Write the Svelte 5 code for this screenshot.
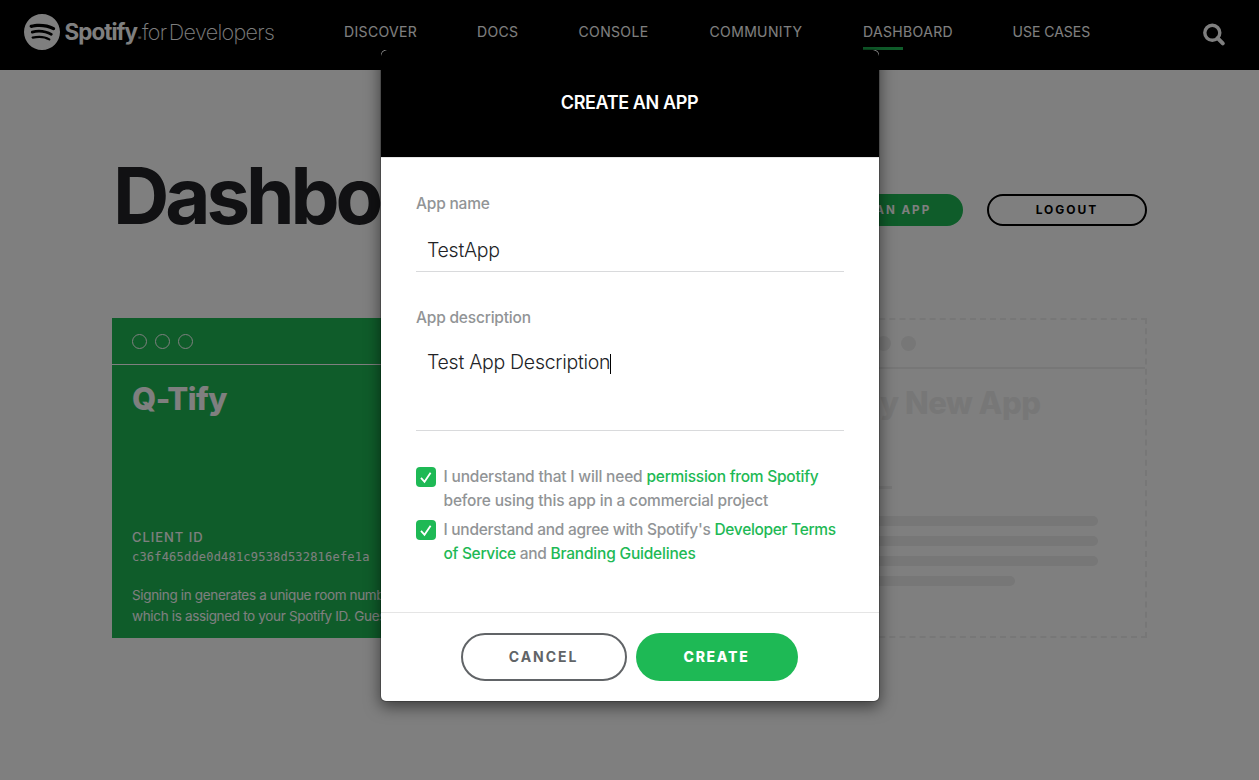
<script>
  const nav = ['Discover', 'Docs', 'Console', 'Community', 'Dashboard', 'Use Cases'];
  const active = 'Dashboard';
  const lines = [90, 90, 90, 60];
  let name = 'TestApp';
  let description = 'Test App Description';
</script>

<div class="page">
  <header>
    <a class="logo" href="#home" aria-label="Spotify for Developers">
      <svg width="36" height="36" viewBox="0 0 24 24" fill="#fff"><path d="M12 0C5.4 0 0 5.4 0 12s5.4 12 12 12 12-5.4 12-12S18.66 0 12 0zm5.521 17.34c-.24.359-.66.48-1.021.24-2.82-1.74-6.36-2.101-10.561-1.141-.418.122-.779-.179-.899-.539-.12-.421.18-.78.54-.9 4.56-1.021 8.52-.6 11.64 1.32.42.18.479.659.301 1.02zm1.44-3.3c-.301.42-.841.6-1.262.3-3.239-1.98-8.159-2.58-11.939-1.38-.479.12-1.02-.12-1.14-.6-.12-.48.12-1.021.6-1.141C9.6 9.9 15 10.561 18.72 12.84c.361.181.54.78.241 1.2zm.12-3.36C15.24 8.4 8.82 8.16 5.16 9.301c-.6.179-1.2-.181-1.38-.721-.18-.601.18-1.2.72-1.381 4.26-1.26 11.28-1.02 15.721 1.621.539.3.719 1.02.419 1.56-.299.421-1.02.599-1.559.3z"/></svg>
      <span class="brand">Spotify</span><span class="reg">®</span><span class="suffix">for Developers</span>
    </a>
    <nav>
      {#each nav as item}
        <a href="#nav" class:active={item === active}>{item}</a>
      {/each}
    </nav>
    <svg class="search" width="24" height="24" viewBox="0 0 24 24" fill="none" stroke="#fff"><circle cx="10.3" cy="9.8" r="7.5" stroke-width="3.4"/><path d="M15.6 15.2l5.2 5.2" stroke-width="4" stroke-linecap="round"/></svg>
  </header>

  <main>
    <div class="top">
      <h1>Dashboard</h1>
      <div class="actions">
        <button class="pill small green">Create an app</button>
        <button class="pill small outline">Logout</button>
      </div>
    </div>

    <div class="cards">
      <article class="app">
        <div class="dots"><i></i><i></i><i></i></div>
        <div class="content">
          <h2>Q-Tify</h2>
          <div class="client">Client ID</div>
          <code>c36f465dde0d481c9538d532816efe1a</code>
          <p>Signing in generates a unique room number<br />which is assigned to your Spotify ID. Guests</p>
        </div>
      </article>
      <article class="empty">
        <div class="dots"><i></i><i></i><i></i></div>
        <div class="content">
          <h2>My New App</h2>
          <div class="rule"></div>
          {#each lines as w}
            <div class="bar" style="width: {w}%"></div>
          {/each}
        </div>
      </article>
    </div>
  </main>

  <div class="backdrop">
    <div class="modal" role="dialog" aria-label="Create an app">
      <div class="modal-head">Create an app</div>
      <div class="modal-body">
        <div class="label">App name</div>
        <div class="field">{name}</div>
        <div class="label second">App description</div>
        <div class="field area">{description}<span class="caret"></span></div>
        <div class="checks">
          <div class="check">
            <svg width="20" height="20" viewBox="0 0 20 20"><rect width="20" height="20" rx="4" fill="#1eb955"/><path d="M5 10.8l3.5 4 6.1-9.1" fill="none" stroke="#fff" stroke-width="1.8"/></svg>
            <div>I understand that I will need <a href="#permission">permission from Spotify</a><br />before using this app in a commercial project</div>
          </div>
          <div class="check terms">
            <svg width="20" height="20" viewBox="0 0 20 20"><rect width="20" height="20" rx="4" fill="#1eb955"/><path d="M5 10.8l3.5 4 6.1-9.1" fill="none" stroke="#fff" stroke-width="1.8"/></svg>
            <div>I understand and agree with Spotify's <a href="#terms">Developer Terms<br />of Service</a> and <a class="branding" href="#branding">Branding Guidelines</a></div>
          </div>
        </div>
      </div>
      <div class="modal-foot">
        <button class="pill cancel">Cancel</button>
        <button class="pill create">Create</button>
      </div>
    </div>
  </div>
</div>

<style>
  :global(body) { margin: 0; }
  .page {
    position: relative;
    height: 780px;
    overflow: hidden;
    background: #fff;
    font-family: Inter, "Liberation Sans", sans-serif;
    box-sizing: border-box;
  }
  .page :global(*) { box-sizing: border-box; }
  a { text-decoration: none; }
  h1, h2, p { margin: 0; }

  header {
    height: 70px;
    background: #000;
    color: #fff;
    display: flex;
    padding: 0 33px 0 24px;
  }
  .logo {
    width: 320px;
    height: 64px;
    display: flex;
    align-items: center;
    color: #fff;
    white-space: nowrap;
    line-height: 64px;
  }
  .logo svg { flex: none; margin-left: -0.5px; }
  .brand { margin-left: 5px; font-size: 22.4px; font-weight: 700; letter-spacing: -0.95px; }
  .reg { font-size: 5px; line-height: 1; margin: 12px 0 0 1px; width: 4px; }
  .suffix { font-size: 21.5px; font-weight: 250; letter-spacing: -0.65px; word-spacing: -3px; }
  nav {
    display: grid;
    grid-template-columns: 133px 101.5px 131px 153.5px 149.5px auto;
    height: 50px;
  }
  nav a {
    display: flex;
    flex-direction: column;
    color: #fff;
    font-size: 14px;
    letter-spacing: 0.35px;
    line-height: 64px;
    text-transform: uppercase;
    white-space: nowrap;
    height: 50px;
  }
  nav a:last-child { letter-spacing: 0; }
  .active::after {
    content: "";
    width: 40px;
    height: 3px;
    margin-top: -17px;
    background: #1eb955;
  }
  .search { margin: 23px 0 0 auto; }

  main { padding: 0 112px; }
  .top { display: flex; justify-content: space-between; padding-top: 86px; height: 166px; }
  h1 {
    margin-left: 1px;
    font-size: 78px;
    font-weight: 700;
    line-height: 80px;
    letter-spacing: -4.1px;
    color: #222326;
  }
  .actions { display: flex; gap: 24px; padding-top: 38px; }
  .pill {
    display: block;
    border: 0;
    border-radius: 500px;
    padding: 0;
    font-family: inherit;
    font-weight: 700;
    text-transform: uppercase;
    white-space: nowrap;
  }
  .small { height: 32px; font-size: 12px; letter-spacing: 2px; }
  .green { background: #1eb955; color: #fff; width: 186px; padding-left: 4px; font-size: 11.6px; }
  .outline { width: 160px; background: transparent; border: 2px solid #000; color: #000; padding-bottom: 2px; }

  .cards { display: flex; justify-content: space-between; margin-top: 82px; }
  article { height: 320px; overflow: hidden; }
  .dots { display: flex; align-items: center; padding-left: 20px; }
  .dots i { width: 15px; height: 15px; border-radius: 50%; }
  .content { padding: 0 20px; display: flex; flex-direction: column; }
  h2 { font-size: 31px; font-weight: 800; line-height: 40px; white-space: nowrap; }
  .app { width: 320px; background: #1eb955; color: #fff; }
  .app .dots { height: 47px; gap: 8px; border-bottom: 1px solid #fff; }
  .app .dots i { border: 1px solid #fff; }
  .app h2 { margin-top: 14px; letter-spacing: -0.55px; }
  .client { margin-top: 108px; font-size: 13px; font-weight: 500; line-height: 20px; letter-spacing: 0.95px; text-transform: uppercase; }
  code { margin-top: 1px; font: 12px/18px "DejaVu Sans Mono", monospace; letter-spacing: 0.2px; }
  p { margin-top: 19px; font-size: 13.5px; line-height: 21px; letter-spacing: -0.34px; white-space: nowrap; }

  .empty { width: 318px; border: 2px dashed #eee; color: #eee; }
  .empty .dots { height: 49px; gap: 10px; border-bottom: 2px solid #eee; }
  .empty .dots i { background: #eee; }
  .empty h2 { margin-top: 14px; letter-spacing: -0.5px; }
  .rule { width: 41px; height: 3px; background: #eee; margin: 63px 0 17px; }
  .bar { height: 10px; border-radius: 5px; background: #eee; margin-top: 10px; }

  .backdrop {
    position: absolute;
    inset: 0;
    display: flex;
    justify-content: center;
    align-items: flex-start;
    padding: 49px 0 0 1px;
    background: rgba(0, 0, 0, 0.5);
  }
  .modal {
    width: 500px;
    height: 653px;
    display: flex;
    flex-direction: column;
    background: #fff;
    background-clip: padding-box;
    border: 1px solid rgba(0, 0, 0, 0.2);
    border-radius: 6px;
    box-shadow: 0 5px 15px rgba(0, 0, 0, 0.5);
  }
  .modal-head {
    height: 108px;
    padding: 0 1px 2px 0;
    background: #000;
    background-clip: padding-box;
    border-bottom: 1px solid #e5e5e5;
    border-radius: 6px 6px 0 0;
    color: #fff;
    font-size: 18px;
    font-weight: 600;
    line-height: 105px;
    letter-spacing: -0.38px;
    text-align: center;
    text-transform: uppercase;
  }
  .modal-body { flex: 1; padding: 34px 35px 0; }
  .label { font-size: 15.5px; font-weight: 500; line-height: 24px; letter-spacing: -0.2px; color: #919496; }
  .second { margin-top: 34px; }
  .field {
    height: 43px;
    margin-top: 13px;
    padding-left: 11px;
    border-bottom: 1px solid #d9dadc;
    color: #222326;
    font-size: 19.5px;
    font-weight: 300;
    line-height: 42px;
    letter-spacing: -0.28px;
  }
  .area { height: 86px; margin-top: 15px; padding-top: 5px; line-height: 24px; }
  .caret { display: inline-block; width: 1px; height: 20px; background: #000; vertical-align: -5px; }
  .checks { margin-top: 34px; display: grid; gap: 5px; }
  .check {
    display: flex;
    gap: 7.5px;
    font-size: 15.5px;
    font-weight: 500;
    line-height: 24px;
    letter-spacing: -0.18px;
    color: #919496;
    white-space: nowrap;
  }
  .terms { letter-spacing: -0.27px; }
  .check svg { flex: none; margin-top: 2px; }
  .check a { color: #1eb955; letter-spacing: -0.25px; }
  .terms a { letter-spacing: -0.32px; }
  .terms .branding { letter-spacing: -0.2px; }
  .modal-foot {
    height: 89px;
    display: flex;
    justify-content: center;
    gap: 9px;
    padding: 20px 2px 0 0;
    border-top: 1px solid #e5e5e5;
  }
  .modal-foot .pill { height: 48px; padding-bottom: 2px; font-size: 14px; }
  .cancel { width: 166px; border: 2px solid #616467; background: #fff; color: #616467; letter-spacing: 1.95px; }
  .create { width: 162px; background: #1eb955; color: #fff; font-weight: 800; letter-spacing: 1.7px; }
</style>
